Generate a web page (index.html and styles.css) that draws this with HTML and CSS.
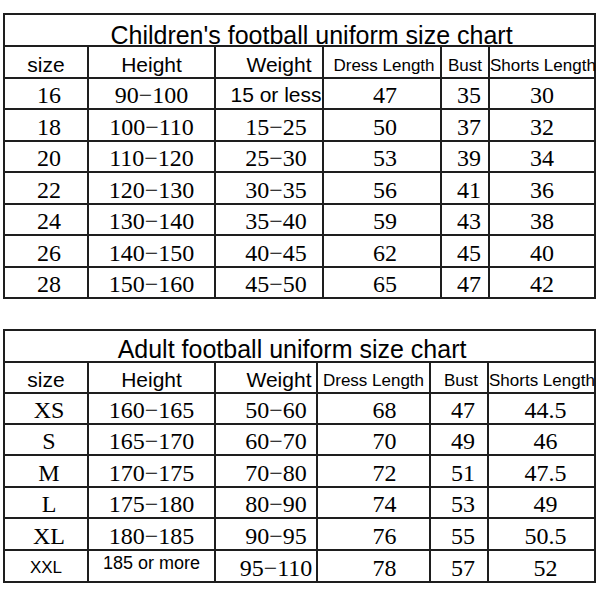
FILE: index.html
```html
<!DOCTYPE html>
<html>
<head>
<meta charset="utf-8">
<link rel="stylesheet" href="styles.css">
</head>
<body>
<table class="chart kids">
  <colgroup>
    <col class="w-size"><col class="w-height"><col class="w-weight-k"><col class="w-dress-k"><col class="w-bust-k"><col class="w-shorts-k">
  </colgroup>
  <tr class="r-title"><th colspan="6" class="title title-k">Children's football uniform size chart</th></tr>
  <tr class="r-head">
    <th class="hd">size</th><th class="hd">Height</th><th class="hd wk-h">Weight</th><th class="hd sm dk-h">Dress Length</th><th class="hd sm">Bust</th><th class="hd sm shorts-h">Shorts Length</th>
  </tr>
  <tr class="r31"><td class="num sz">16</td><td class="num">90−100</td><td class="txt wk">15 or less</td><td class="num dk">47</td><td class="num bk">35</td><td class="num">30</td></tr>
  <tr class="r32"><td class="num sz">18</td><td class="num">100−110</td><td class="num wk">15−25</td><td class="num dk">50</td><td class="num bk">37</td><td class="num">32</td></tr>
  <tr class="r31"><td class="num sz">20</td><td class="num">110−120</td><td class="num wk">25−30</td><td class="num dk">53</td><td class="num bk">39</td><td class="num">34</td></tr>
  <tr class="r32"><td class="num sz">22</td><td class="num">120−130</td><td class="num wk">30−35</td><td class="num dk">56</td><td class="num bk">41</td><td class="num">36</td></tr>
  <tr class="r31"><td class="num sz">24</td><td class="num">130−140</td><td class="num wk">35−40</td><td class="num dk">59</td><td class="num bk">43</td><td class="num">38</td></tr>
  <tr class="r32"><td class="num sz">26</td><td class="num">140−150</td><td class="num wk">40−45</td><td class="num dk">62</td><td class="num bk">45</td><td class="num">40</td></tr>
  <tr class="r31"><td class="num sz">28</td><td class="num">150−160</td><td class="num wk">45−50</td><td class="num dk">65</td><td class="num bk">47</td><td class="num">42</td></tr>
</table>

<table class="chart adult">
  <colgroup>
    <col class="w-size"><col class="w-height"><col class="w-weight-a"><col class="w-dress-a"><col class="w-bust-a"><col class="w-shorts-a">
  </colgroup>
  <tr class="r-title"><th colspan="6" class="title title-a">Adult football uniform size chart</th></tr>
  <tr class="r31 r-head">
    <th class="hd">size</th><th class="hd">Height</th><th class="hd wa-h">Weight</th><th class="hd sm">Dress Length</th><th class="hd sm ba-h">Bust</th><th class="hd sm shorts-h">Shorts Length</th>
  </tr>
  <tr class="r31"><td class="num sz">XS</td><td class="num">160−165</td><td class="num wa">50−60</td><td class="num da">68</td><td class="num ba">47</td><td class="num sa">44.5</td></tr>
  <tr class="r31"><td class="num sz">S</td><td class="num">165−170</td><td class="num wa">60−70</td><td class="num da">70</td><td class="num ba">49</td><td class="num sa">46</td></tr>
  <tr class="r32"><td class="num sz">M</td><td class="num">170−175</td><td class="num wa">70−80</td><td class="num da">72</td><td class="num ba">51</td><td class="num sa">47.5</td></tr>
  <tr class="r31"><td class="num sz">L</td><td class="num">175−180</td><td class="num wa">80−90</td><td class="num da">74</td><td class="num ba">53</td><td class="num sa">49</td></tr>
  <tr class="r32"><td class="num sz">XL</td><td class="num">180−185</td><td class="num wa">90−95</td><td class="num da">76</td><td class="num ba">55</td><td class="num sa">50.5</td></tr>
  <tr class="r32"><td class="txt xxl">XXL</td><td class="txt more">185 or more</td><td class="num wa">95−110</td><td class="num da">78</td><td class="num ba">57</td><td class="num sa">52</td></tr>
</table>
</body>
</html>
```

FILE: styles.css
```css
html, body {
  margin: 0;
  padding: 0;
  background: #fff;
}

body {
  width: 600px;
  height: 600px;
  overflow: hidden;
}

.chart {
  border-collapse: separate;
  border-spacing: 0;
  table-layout: fixed;
  width: 593px;
  margin-left: 3px;
  border-top: 2px solid #1e1e1e;
  border-left: 2px solid #1e1e1e;
  color: #000;
}

.kids {
  margin-top: 13px;
}

.adult {
  margin-top: 30px;
}

.chart th,
.chart td {
  box-sizing: border-box;
  border-right: 2px solid #1e1e1e;
  border-bottom: 2px solid #1e1e1e;
  padding: 0;
  text-align: center;
  vertical-align: bottom;
  white-space: nowrap;
  font-weight: normal;
}

.w-size { width: 84px; }
.w-height { width: 127px; }
.w-weight-k { width: 108px; }
.w-dress-k { width: 118px; }
.w-bust-k { width: 48px; }
.w-shorts-k { width: 106px; }
.w-weight-a { width: 102px; }
.w-dress-a { width: 113px; }
.w-bust-a { width: 58px; }
.w-shorts-a { width: 107px; }

.r-title th { height: 32px; }
.r-head th { height: 32px; }
.r31 td, .r31 th { height: 31px; }
.r32 td { height: 32px; }

.chart .title {
  font-family: "Liberation Sans", Arial, sans-serif;
  font-size: 25px;
  line-height: 20px;
  padding-bottom: 0;
}

.chart .title-k { padding-left: 24px; }
.chart .title-a { padding-right: 15px; padding-bottom: 2px; }

.chart .hd {
  font-family: "Liberation Sans", Arial, sans-serif;
  font-size: 21px;
  line-height: 21px;
  padding-bottom: 2px;
}

.chart .hd.sm {
  font-size: 17px;
  line-height: 17px;
  padding-bottom: 3px;
}

.chart .dk-h { font-size: 18px; padding-left: 4px; }
.chart .shorts-h {
  font-size: 16.5px;
  padding-bottom: 7px;
}

.chart .wk-h { padding-left: 20px; }
.chart .wa-h { padding-left: 26px; }
.chart .ba-h { padding-left: 4px; }

.chart .num {
  font-family: "Liberation Serif", "Times New Roman", serif;
  font-size: 24px;
  line-height: 24px;
  padding-bottom: 1px;
}

.chart .txt {
  font-family: "Liberation Sans", Arial, sans-serif;
  font-size: 21px;
  line-height: 21px;
  padding-bottom: 3px;
}

.chart .sz { padding-left: 6px; }
.chart .wk { padding-left: 14px; }
.chart .dk { padding-left: 6px; }
.chart .bk { padding-left: 8px; }

.chart .wa { padding-left: 20px; }
.chart .da { padding-left: 22px; }
.chart .ba { padding-left: 8px; }
.chart .sa { padding-left: 8px; }

.chart .xxl {
  font-size: 17px;
  padding-bottom: 3px;
  padding-left: 0;
}

.chart .more {
  font-size: 18px;
  padding-bottom: 7px;
}
```
